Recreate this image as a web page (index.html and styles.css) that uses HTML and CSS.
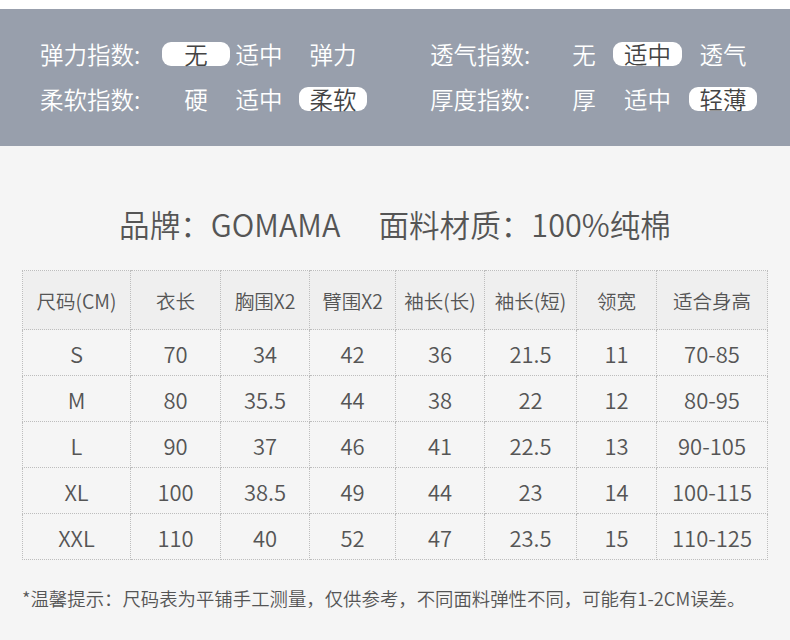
FILE: index.html
```html
<!DOCTYPE html>
<html lang="zh">
<head>
<meta charset="utf-8">
<link rel="stylesheet" href="styles.css">
</head>
<body>
<div class="topstrip"></div>
<section class="band">
  <div class="block left">
    <span class="lab">弹力指数:</span><span class="opt pill">无</span><span class="opt">适中</span><span class="opt">弹力</span>
    <span class="lab">柔软指数:</span><span class="opt">硬</span><span class="opt">适中</span><span class="opt pill">柔软</span>
  </div>
  <div class="block right">
    <span class="lab">透气指数:</span><span class="opt">无</span><span class="opt pill">适中</span><span class="opt">透气</span>
    <span class="lab">厚度指数:</span><span class="opt">厚</span><span class="opt">适中</span><span class="opt pill">轻薄</span>
  </div>
</section>
<h1 class="title"><span>品牌：GOMAMA</span><span class="sp">面料材质：100%纯棉</span></h1>
<table class="size">
  <colgroup>
    <col class="c1"><col class="c2"><col class="c3"><col class="c4"><col class="c5"><col class="c6"><col class="c7"><col class="c8">
  </colgroup>
  <thead>
    <tr><th>尺码(CM)</th><th>衣长</th><th>胸围X2</th><th>臂围X2</th><th>袖长(长)</th><th>袖长(短)</th><th>领宽</th><th>适合身高</th></tr>
  </thead>
  <tbody>
    <tr><td>S</td><td>70</td><td>34</td><td>42</td><td>36</td><td>21.5</td><td>11</td><td>70-85</td></tr>
    <tr><td>M</td><td>80</td><td>35.5</td><td>44</td><td>38</td><td>22</td><td>12</td><td>80-95</td></tr>
    <tr><td>L</td><td>90</td><td>37</td><td>46</td><td>41</td><td>22.5</td><td>13</td><td>90-105</td></tr>
    <tr><td>XL</td><td>100</td><td>38.5</td><td>49</td><td>44</td><td>23</td><td>14</td><td>100-115</td></tr>
    <tr><td>XXL</td><td>110</td><td>40</td><td>52</td><td>47</td><td>23.5</td><td>15</td><td>110-125</td></tr>
  </tbody>
</table>
<p class="note">*温馨提示：尺码表为平铺手工测量，仅供参考，不同面料弹性不同，可能有1-2CM误差。</p>
</body>
</html>
```
FILE: styles.css
```css
html, body {
  margin: 0;
  padding: 0;
}
body {
  width: 790px;
  height: 640px;
  overflow: hidden;
  background: #f5f5f5;
  font-family: "Noto Sans CJK SC", "Noto Sans", sans-serif;
  font-weight: 350;
  color: #555;
}
.topstrip {
  height: 9px;
  background: #ffffff;
}
.band {
  height: 137px;
  background: #989fac;
  display: flex;
  box-sizing: border-box;
  padding-top: 33px;
}
.block {
  display: grid;
  row-gap: 21px;
  grid-auto-rows: 24px;
  align-items: center;
  color: #fff;
  font-size: 23.5px;
}
.left {
  margin-left: 40px;
  grid-template-columns: 122px 68px 58px 79px;
}
.right {
  margin-left: 63px;
  grid-template-columns: 132px 44px 76px 75px;
}
.lab {
  line-height: 24px;
  white-space: nowrap;
}
.opt {
  line-height: 24px;
  text-align: center;
  white-space: nowrap;
}
.left .opt:nth-child(4n) { justify-self: end; width: 68px; }
.right .opt:nth-child(4n+3) { justify-self: end; width: 69px; }
.right .opt:nth-child(4n) { justify-self: end; width: 68px; }
.right .opt:nth-child(7) { justify-self: center; width: 48px; margin-left: 7px; }
.pill {
  background: #fff;
  color: #444;
  border-radius: 9px;
  height: 24px;
}
.title {
  margin: 60px 0 0;
  text-align: center;
  font-weight: 350;
  font-size: 30.6px;
  line-height: 36px;
  color: #555;
}
.title .sp {
  margin-left: 38px;
}
.size {
  margin: 28px 0 0 22px;
  width: 745px;
  border-collapse: collapse;
  table-layout: fixed;
  color: #555;
}
.c1 { width: 108px; }
.c2 { width: 90px; }
.c3 { width: 89px; }
.c4 { width: 86px; }
.c5 { width: 89px; }
.c6 { width: 92px; }
.c7 { width: 80px; }
.c8 { width: 111px; }
.size th, .size td {
  border: 1px dotted #bdbdbd;
  text-align: center;
  padding: 0;
  white-space: nowrap;
}
.size th {
  height: 58px;
  background: #efefef;
  font-weight: 350;
  font-size: 19.5px;
}
.size td {
  height: 45px;
  font-size: 22px;
}
.note {
  margin: 25px 0 0 22px;
  font-size: 18.4px;
  color: #555;
}
```
